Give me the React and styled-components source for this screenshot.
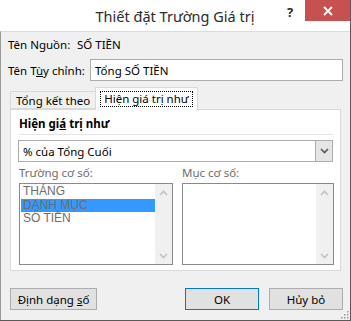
import React from 'react';
import styled, { createGlobalStyle } from 'styled-components';

const GlobalStyle = createGlobalStyle`
  html, body {
    margin: 0;
    padding: 0;
    background: #ffffff;
  }
  body {
    font-family: 'Noto Sans', 'Liberation Sans', sans-serif;
    font-size: 11.5px;
    color: #000;
  }
`;

const Window = styled.div`
  position: relative;
  width: 351px;
  height: 321px;
  box-sizing: border-box;
  display: flex;
  flex-direction: column;
  border-right: 1px solid #5a5a5a;
  border-bottom: 1px solid #5a5a5a;
  background: #ffffff;
  overflow: hidden;
`;

const TitleBar = styled.div`
  height: 31px;
  flex: none;
  display: grid;
  grid-template-columns: 1fr auto 1fr;
  align-items: start;
  background: #ffffff;
`;

const Title = styled.div`
  grid-column: 2;
  font-size: 14.5px;
  line-height: 20px;
  padding-top: 6px;
  color: #2b2b2b;
  white-space: nowrap;
`;

const Controls = styled.div`
  grid-column: 3;
  justify-self: end;
  display: flex;
  align-items: flex-start;
`;

const Help = styled.div`
  width: 20px;
  margin-right: 5px;
  padding-top: 3px;
  text-align: center;
  font-weight: 700;
  font-size: 13px;
  color: #2a2a2a;
`;

const Close = styled.div`
  width: 45px;
  height: 21px;
  background: #c75050;
  display: flex;
  align-items: center;
  justify-content: center;
`;

const Body = styled.div`
  flex: 1;
  background: #f0f0f0;
  border-top: 1px solid #dcdcdc;
  border-left: 1px solid #9a9a9a;
  padding: 4px 7px 0 7px;
  display: flex;
  flex-direction: column;
`;

const FieldRow = styled.div`
  display: flex;
  align-items: center;
  height: ${({ $h }) => $h || 16}px;
  margin-top: ${({ $mt }) => $mt || 0}px;
`;

const Label = styled.span`
  width: ${({ $w }) => $w}px;
  flex: none;
  white-space: nowrap;
`;

const TextBox = styled.div`
  flex: 1;
  height: 22px;
  box-sizing: border-box;
  border: 1px solid #acacac;
  background: #fff;
  padding-left: 4px;
  display: flex;
  align-items: center;
`;

const TabStrip = styled.div`
  display: flex;
  align-items: flex-end;
  height: 22px;
  margin-top: 6px;
  padding-left: 2px;
`;

const Tab = styled.div`
  box-sizing: border-box;
  height: ${({ $active }) => ($active ? 23 : 18)}px;
  padding: 0 ${({ $active }) => ($active ? 5 : 5)}px;
  border: 1px solid #d9d9d9;
  border-bottom: ${({ $active }) => ($active ? 'none' : '1px solid #d9d9d9')};
  background: ${({ $active }) => ($active ? '#ffffff' : '#f0f0f0')};
  margin-bottom: ${({ $active }) => ($active ? -1 : 0)}px;
  margin-left: ${({ $active }) => ($active ? -1 : 0)}px;
  display: flex;
  align-items: center;
  position: relative;
  z-index: ${({ $active }) => ($active ? 1 : 0)};
  white-space: nowrap;
`;

const Focus = styled.span`
  outline: 1px dotted #000;
  padding: 0 3px;
  line-height: 14px;
`;

const Panel = styled.div`
  margin: 0 2px;
  height: 162px;
  box-sizing: border-box;
  border: 1px solid #d9d9d9;
  background: #ffffff;
  padding: 6px 7px 0 8px;
  display: flex;
  flex-direction: column;
`;

const SectionTitle = styled.div`
  font-weight: 700;
  line-height: 16px;
  padding-bottom: 2px;
  border-bottom: 1px solid #e3e3e3;
`;

const Select = styled.div`
  margin-top: 5px;
  margin-left: -1px;
  height: 22px;
  box-sizing: border-box;
  border: 1px solid #acacac;
  display: flex;
  align-items: stretch;
`;

const SelectValue = styled.div`
  flex: 1;
  padding-left: 4px;
  display: flex;
  align-items: center;
`;

const SelectButton = styled.div`
  width: 16px;
  background: #e5e5e5;
  border-left: 1px solid #acacac;
  display: flex;
  align-items: center;
  justify-content: center;
`;

const ListGrid = styled.div`
  margin-top: 3px;
  display: grid;
  grid-template-columns: 154px 152px;
  column-gap: 9px;
`;

const ListColumn = styled.div`
  display: flex;
  flex-direction: column;
`;

const ListLabel = styled.div`
  color: #6d6d6d;
  line-height: 16px;
  height: 18px;
`;

const ListBox = styled.div`
  height: 82px;
  box-sizing: border-box;
  border: 1px solid #8a8a8a;
  background: #fff;
  display: flex;
`;

const Items = styled.div`
  flex: 1;
  padding: 1px 0 0 1px;
`;

const Item = styled.div`
  height: 13.5px;
  line-height: 13.5px;
  padding-left: 2px;
  font-family: 'Liberation Sans', 'Noto Sans', sans-serif;
  font-size: 12px;
  color: #6d6d6d;
  background: ${({ $selected }) => ($selected ? '#3399ff' : 'transparent')};
  white-space: nowrap;
`;

const ScrollBar = styled.div`
  width: 17px;
  background: #f0f0f0;
  display: flex;
  flex-direction: column;
  justify-content: space-between;
  align-items: center;
  padding: 6px 0 5px;
`;

const Footer = styled.div`
  margin-top: 17px;
  display: flex;
  align-items: center;
  padding-left: 2px;
`;

const Button = styled.div`
  width: ${({ $w }) => $w}px;
  height: 22px;
  box-sizing: border-box;
  border: 1px solid ${({ $primary }) => ($primary ? '#0078d7' : '#adadad')};
  background: #e1e1e1;
  display: flex;
  align-items: center;
  justify-content: center;
  margin-left: ${({ $ml }) => $ml || 0}px;
  white-space: nowrap;
`;

const Grip = styled.svg`
  position: absolute;
  right: 1px;
  bottom: 1px;
`;

const Chevron = ({ up, color = '#c2c2c2', w = 9 }) => (
  <svg width={w} height="6" viewBox="0 0 9 6">
    <path
      d={up ? 'M1 5 L4.5 1.5 L8 5' : 'M1 1 L4.5 4.5 L8 1'}
      fill="none"
      stroke={color}
      strokeWidth="1.6"
    />
  </svg>
);

const List = ({ items, selected }) => (
  <ListBox>
    <Items>
      {items.map((it) => (
        <Item key={it} $selected={it === selected}>
          {it}
        </Item>
      ))}
    </Items>
    <ScrollBar>
      <Chevron up />
      <Chevron />
    </ScrollBar>
  </ListBox>
);

export default function App() {
  return (
    <>
      <GlobalStyle />
      <Window>
        <TitleBar>
          <Title>Thiết đặt Trường Giá trị</Title>
          <Controls>
            <Help>?</Help>
            <Close>
              <svg width="10" height="10" viewBox="0 0 10 10">
                <path d="M1 1 L9 9 M9 1 L1 9" stroke="#fff" strokeWidth="1.8" />
              </svg>
            </Close>
          </Controls>
        </TitleBar>
        <Body>
          <FieldRow>
            <Label $w={69}>Tên Nguồn:</Label>
            <span>SỐ TIỀN</span>
          </FieldRow>
          <FieldRow $h={22} $mt={7}>
            <Label $w={82}>
              <span>
                Tên T<u>ù</u>y chỉnh:
              </span>
            </Label>
            <TextBox>Tổng SỐ TIỀN</TextBox>
          </FieldRow>
          <TabStrip>
            <Tab>Tổng kết theo</Tab>
            <Tab $active>
              <Focus>Hiện giá trị như</Focus>
            </Tab>
          </TabStrip>
          <Panel>
            <SectionTitle>
              Hiện gi<u>á</u> trị như
            </SectionTitle>
            <Select>
              <SelectValue>% của Tổng Cuối</SelectValue>
              <SelectButton>
                <Chevron color="#555" />
              </SelectButton>
            </Select>
            <ListGrid>
              <ListColumn>
                <ListLabel>Trường cơ số:</ListLabel>
                <List items={['THÁNG', 'DANH MỤC', 'SỐ TIỀN']} selected="DANH MỤC" />
              </ListColumn>
              <ListColumn>
                <ListLabel>Mục cơ số:</ListLabel>
                <List items={[]} />
              </ListColumn>
            </ListGrid>
          </Panel>
          <Footer>
            <Button $w={87}>
              <span>
                Định dạng <u>s</u>ố
              </span>
            </Button>
            <Button $w={74} $ml={88} $primary>
              OK
            </Button>
            <Button $w={74} $ml={10}>
              Hủy bỏ
            </Button>
          </Footer>
        </Body>
        <Grip width="10" height="10" viewBox="0 0 10 10">
          {[
            [8, 2], [8, 5], [8, 8], [5, 5], [5, 8], [2, 8],
          ].map(([x, y]) => (
            <rect key={`${x}-${y}`} x={x} y={y} width="1.5" height="1.5" fill="#9a9a9a" />
          ))}
        </Grip>
      </Window>
    </>
  );
}
